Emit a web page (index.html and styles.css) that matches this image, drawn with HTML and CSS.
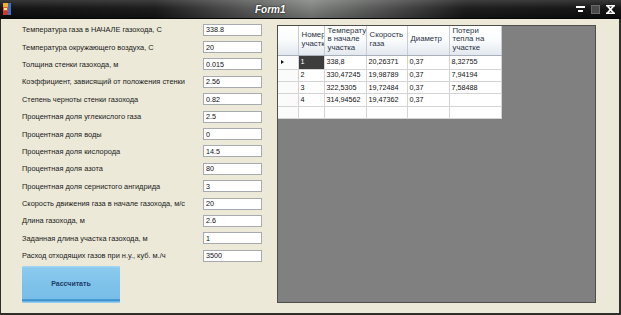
FILE: index.html
```html
<!DOCTYPE html>
<html lang="ru">

<head>
    <meta charset="UTF-8">
    <meta name="viewport" content="width=device-width, initial-scale=1.0">
    <title>Form1</title>
    <link rel="stylesheet" href="styles.css">
</head>

<body>
    <div class="window">
        <header class="titlebar">
            <svg class="app-icon" width="8" height="12" viewBox="0 0 8 12">
                <rect x="0" y="0" width="8" height="12" fill="#d9d2c0" />
                <rect x="0" y="0" width="5" height="4" fill="#f2b12b" />
                <rect x="5" y="0" width="3" height="12" fill="#3d6fc4" />
                <rect x="0" y="4" width="5" height="4" fill="#e5572e" />
                <rect x="0" y="8" width="5" height="4" fill="#c93a2f" />
                <rect x="1" y="5" width="3" height="2" fill="#f7e7a0" />
            </svg>
            <span class="title">Form1</span>
            <div class="controls">
                <svg width="9" height="9" viewBox="0 0 9 9">
                    <rect x="0" y="1" width="9" height="2" fill="#fff" />
                    <rect x="2" y="5" width="5" height="2" fill="#fff" />
                </svg>
                <svg width="9" height="9" viewBox="0 0 9 9">
                    <rect x="0.5" y="0.5" width="8" height="8" fill="#4a4a4a" stroke="#6a6a6a" />
                </svg>
                <svg width="9" height="9" viewBox="0 0 9 9">
                    <rect x="0" y="0" width="9" height="1.5" fill="#fff" />
                    <rect x="0" y="7.5" width="9" height="1.5" fill="#fff" />
                    <path d="M1.5 1 L7.5 8 M7.5 1 L1.5 8" stroke="#fff" stroke-width="1.8" />
                </svg>
            </div>
        </header>

        <main class="client">
            <form class="params">
                <div class="field">
                    <label for="t_start">Температура газа в НАЧАЛЕ газохода, С</label>
                    <input id="t_start" type="text" value="338.8">
                </div>
                <div class="field">
                    <label for="t_air">Температура окружающего воздуха, С</label>
                    <input id="t_air" type="text" value="20">
                </div>
                <div class="field">
                    <label for="wall">Толщина стенки газохода, м</label>
                    <input id="wall" type="text" value="0.015">
                </div>
                <div class="field">
                    <label for="coef">Коэффициент, зависящий от положения стенки</label>
                    <input id="coef" type="text" value="2.56">
                </div>
                <div class="field">
                    <label for="black">Степень черноты стенки газохода</label>
                    <input id="black" type="text" value="0.82">
                </div>
                <div class="field">
                    <label for="co2">Процентная доля углекислого газа</label>
                    <input id="co2" type="text" value="2.5">
                </div>
                <div class="field">
                    <label for="h2o">Процентная доля воды</label>
                    <input id="h2o" type="text" value="0">
                </div>
                <div class="field">
                    <label for="o2">Процентная доля кислорода</label>
                    <input id="o2" type="text" value="14.5">
                </div>
                <div class="field">
                    <label for="n2">Процентная доля азота</label>
                    <input id="n2" type="text" value="80">
                </div>
                <div class="field">
                    <label for="so2">Процентная доля сернистого ангидрида</label>
                    <input id="so2" type="text" value="3">
                </div>
                <div class="field">
                    <label for="speed">Скорость движения газа в начале газохода, м/с</label>
                    <input id="speed" type="text" value="20">
                </div>
                <div class="field">
                    <label for="len">Длина газохода, м</label>
                    <input id="len" type="text" value="2.6">
                </div>
                <div class="field">
                    <label for="seg">Заданная длина участка газохода, м</label>
                    <input id="seg" type="text" value="1">
                </div>
                <div class="field">
                    <label for="flow">Расход отходящих газов при н.у., куб. м./ч</label>
                    <input id="flow" type="text" value="3500">
                </div>

                <button type="button" class="calc">Рассчитать</button>
            </form>

            <div class="grid">
                <table>
                    <colgroup>
                        <col class="c-rowhead">
                        <col class="c-num">
                        <col class="c-temp">
                        <col class="c-speed">
                        <col class="c-diam">
                        <col class="c-loss">
                    </colgroup>
                    <thead>
                        <tr>
                            <th></th>
                            <th>Номер участка</th>
                            <th>Температура в начале участка</th>
                            <th>Скорость газа</th>
                            <th>Диаметр</th>
                            <th>Потери тепла на участке</th>
                        </tr>
                    </thead>
                    <tbody>
                        <tr class="current">
                            <td class="rowhead"><span class="arrow"></span></td>
                            <td class="selected">1</td>
                            <td>338,8</td>
                            <td>20,26371</td>
                            <td>0,37</td>
                            <td>8,32755</td>
                        </tr>
                        <tr>
                            <td class="rowhead"></td>
                            <td>2</td>
                            <td>330,47245</td>
                            <td>19,98789</td>
                            <td>0,37</td>
                            <td>7,94194</td>
                        </tr>
                        <tr>
                            <td class="rowhead"></td>
                            <td>3</td>
                            <td>322,5305</td>
                            <td>19,72484</td>
                            <td>0,37</td>
                            <td>7,58488</td>
                        </tr>
                        <tr>
                            <td class="rowhead"></td>
                            <td>4</td>
                            <td>314,94562</td>
                            <td>19,47362</td>
                            <td>0,37</td>
                            <td></td>
                        </tr>
                        <tr>
                            <td class="rowhead"></td>
                            <td></td>
                            <td></td>
                            <td></td>
                            <td></td>
                            <td></td>
                        </tr>
                    </tbody>
                </table>
            </div>
        </main>
    </div>
</body>

</html>
```

FILE: styles.css
```css
body {
    margin: 0;
    background-color: #ece9d8;
    font-family: 'Liberation Sans', Arial, sans-serif;
}

.window {
    width: 621px;
    height: 315px;
    box-sizing: border-box;
    display: flex;
    flex-direction: column;
    background-color: #ece9d8;
    border: 2px solid #2e2e2b;
    border-top: none;
    border-left-width: 1px;
}

/* title bar */

.titlebar {
    height: 18px;
    flex-shrink: 0;
    display: grid;
    grid-template-columns: 255px auto 1fr;
    align-items: center;
    margin: 0 -2px 0 -1px;
    background:
        linear-gradient(180deg, rgba(255, 255, 255, 0.18) 0%, rgba(255, 255, 255, 0.04) 45%, rgba(0, 0, 0, 0.15) 100%),
        linear-gradient(90deg, #0c0c0c 0%, #141414 25%, #7b7d7b 50%, #151515 75%, #0c0c0c 100%);
    border-bottom: 1px solid #050505;
}

.app-icon {
    margin-left: 3px;
}

.title {
    color: white;
    font-size: 10px;
    font-weight: bold;
    font-style: italic;
    text-shadow: 0 0 2px #000;
}

.controls {
    justify-self: end;
    display: flex;
    gap: 6px;
    padding-right: 6px;
}

/* client area */

.client {
    flex: 1;
    display: flex;
    align-items: flex-start;
    padding: 2px 0 0 21px;
}

.params {
    width: 240px;
    margin: 0;
    display: flex;
    flex-direction: column;
}

.field {
    height: 17.4px;
    display: flex;
    align-items: center;
    justify-content: space-between;
}

.field label {
    font-size: 7.4px;
    color: #1a1a1a;
}

.field input {
    width: 59px;
    height: 12px;
    box-sizing: border-box;
    border: 1px solid #a7abb0;
    padding: 0 2px;
    margin: 0;
    background-color: white;
    font-family: 'Liberation Sans', Arial, sans-serif;
    font-size: 7.2px;
    color: #111;
}

input:focus {
    outline: none;
}

.calc {
    width: 98px;
    height: 37px;
    margin-top: 1.5px;
    border: none;
    border-radius: 1px;
    padding: 0 0 2px 0;
    background: linear-gradient(180deg, #a7d8f3 0%, #8acaee 6%, #7ec2ea 50%, #78bee8 88%, #3f93cf 91%, #3f93cf 94%, #86c6ec 97%, #9dd2f1 100%);
    color: #1e3b69;
    font-family: 'Liberation Sans', Arial, sans-serif;
    font-size: 7px;
    font-weight: bold;
    cursor: pointer;
}

/* data grid */

.grid {
    width: 319px;
    height: 278px;
    box-sizing: border-box;
    margin: 4px 0 0 15px;
    background-color: #808080;
    border: 1px solid #4e4e4a;
    overflow: hidden;
}

table {
    border-collapse: collapse;
    table-layout: fixed;
    width: 223px;
    font-size: 7px;
}

.c-rowhead { width: 20px; }
.c-num { width: 26px; }
.c-temp { width: 42px; }
.c-speed { width: 41px; }
.c-diam { width: 42px; }
.c-loss { width: 52px; }

th {
    height: 29px;
    padding: 0 2px 1px 3px;
    box-sizing: border-box;
    background: linear-gradient(180deg, #ffffff 0%, #fbfcfd 45%, #e3e8ef 100%);
    border-right: 1px solid #c7cdd6;
    border-bottom: 1px solid #a8b0bc;
    color: #2a3444;
    font-size: 7.8px;
    font-weight: normal;
    text-align: left;
    vertical-align: middle;
    line-height: 8.6px;
    overflow: hidden;
}

td {
    height: 12.4px;
    padding: 0 2px;
    box-sizing: border-box;
    background-color: white;
    border: 1px solid #d4d4d4;
    color: #111;
    font-size: 7.2px;
    line-height: 10px;
    white-space: nowrap;
    overflow: hidden;
}

tr.current td {
    height: 14px;
}

td.rowhead {
    background-color: #fbfbfb;
    border-left: none;
    padding: 0 0 0 3px;
}

td.selected {
    background-color: #3d3d3d;
    color: white;
}

.arrow {
    display: inline-block;
    width: 0;
    height: 0;
    border-top: 2.5px solid transparent;
    border-bottom: 2.5px solid transparent;
    border-left: 3px solid #111;
}
```
